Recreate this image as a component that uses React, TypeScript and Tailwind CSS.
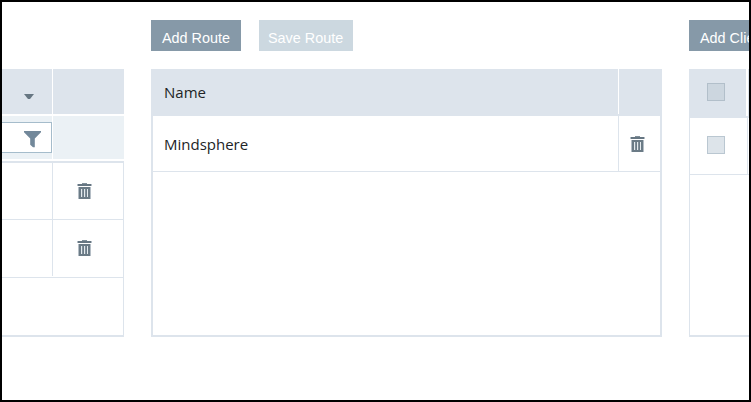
import React from 'react';

function Trash() {
  return (
    <svg width="15" height="16" viewBox="0 0 15 16" className="block shrink-0" shapeRendering="crispEdges">
      <path d="M5 0h5v1H5z" fill="#81909a" />
      <path d="M1 1h13v2H1z" fill="#667682" />
      <path d="M0 1h1v2H0zM14 1h1v2h-1zM1 4h1v12H1zM13 4h1v12h-1z" fill="#b5bec6" />
      <path d="M2 4h11v12H2z" fill="#6b7b86" />
      <path d="M4 6h1v8H4zM7 6h1v8H7zM10 6h1v8h-1z" fill="#e4eaee" />
      <path d="M5 6h1v8H5zM8 6h1v8H8z" fill="#a3afb8" opacity="0.4" />
    </svg>
  );
}

function Filter() {
  return (
    <svg width="17" height="17" viewBox="0 0 17 17" className="block">
      <path d="M0 0h17v1.2L10.8 7.4V16.2H9L6.2 13.8V7.4L0 1.2z" fill="#72889a" />
    </svg>
  );
}

function Caret() {
  return (
    <svg width="10" height="6" viewBox="0 0 10 6" className="block">
      <path d="M0 0h10L6 5H4z" fill="#667682" />
    </svg>
  );
}

function Button({ label, className }: { label: string; className: string }) {
  return (
    <button className={`h-[31px] shrink-0 whitespace-nowrap pt-[5px] text-left font-['Liberation_Sans',Arial,sans-serif] text-[14.4px] leading-[26px] text-white ${className}`}>
      {label}
    </button>
  );
}

function Devices() {
  return (
    <section className="h-[268px] w-[122px] shrink-0">
      <div className="flex h-[45px] bg-[#dde4ec]">
        <div className="w-[51px] border-r border-white pl-[22px] pt-[25px]"><Caret /></div>
      </div>
      <div className="mt-0.5 flex h-[43px] bg-[#ebf1f5]">
        <div className="w-[51px] shrink-0 border-r border-white pt-1.5">
          <div className="h-[31px] w-[50px] border-y border-r border-[#a5bccb] bg-white pl-[22px] pt-2"><Filter /></div>
        </div>
      </div>
      <div className="mt-0.5 h-[176px] border-b-2 border-r border-t-2 border-[#dde4ec]">
        <div className="flex h-[57px] border-b border-[#dde4ec]">
          <div className="w-[51px] border-r border-[#dde4ec]" />
          <div className="pl-6 pt-5"><Trash /></div>
        </div>
        <div className="flex h-[58px] border-b border-[#dde4ec]">
          <div className="h-14 w-[51px] border-r border-[#dde4ec]" />
          <div className="pl-6 pt-5"><Trash /></div>
        </div>
      </div>
    </section>
  );
}

function Routes() {
  return (
    <section className="ml-[27px] h-[268px] w-[511px] shrink-0 border-x-2 border-b-2 border-[#dde4ec] font-['Open_Sans','Noto_Sans',sans-serif] text-[15px] text-[#222426]">
      <div className="flex h-[47px] bg-[#dde4ec]">
        <div className="h-[45px] w-[466px] border-r border-white pl-[11px] leading-[47px]">
          <span>Name</span>
        </div>
      </div>
      <div className="flex h-14 border-b border-[#dde4ec]">
        <div className="w-[466px] border-r border-[#dde4ec] pl-[11px] leading-[57px]">
          <span>Mindsphere</span>
        </div>
        <div className="pl-[11px] pt-5"><Trash /></div>
      </div>
    </section>
  );
}

function Clients() {
  return (
    <section className="ml-[27px] h-[268px] w-[60px] shrink-0 border-b-2 border-l border-[#dde4ec]">
      <div className="flex h-[49px] bg-[#dde4ec]">
        <div className="h-[47px] w-[58px] border-r-2 border-white pl-[17px] pt-3.5">
          <div className="size-[18px] border border-[#b2bfca] bg-[#ccd6df]" />
        </div>
      </div>
      <div className="flex h-[57px] border-b border-[#dde4ec]">
        <div className="w-[58px] border-r border-[#dde4ec] pl-[17px] pt-[18px]">
          <div className="size-[18px] border border-[#bac7d1] bg-[#dde4ea]" />
        </div>
      </div>
    </section>
  );
}

export default function App() {
  return (
    <main className="h-[402px] w-[751px] overflow-hidden border-2 border-black bg-white">
      <div className="flex pl-[149px] pt-[18px]">
        <Button label="Add Route" className="w-[90px] bg-[#8699a8] pl-[11px]" />
        <Button label="Save Route" className="ml-[18px] w-[94px] bg-[#ccd8e0] pl-[9px]" />
        <Button label="Add Clie" className="ml-[336px] w-[60px] bg-[#8699a8] pl-[11px]" />
      </div>
      <div className="mt-[18px] flex">
        <Devices />
        <Routes />
        <Clients />
      </div>
    </main>
  );
}
